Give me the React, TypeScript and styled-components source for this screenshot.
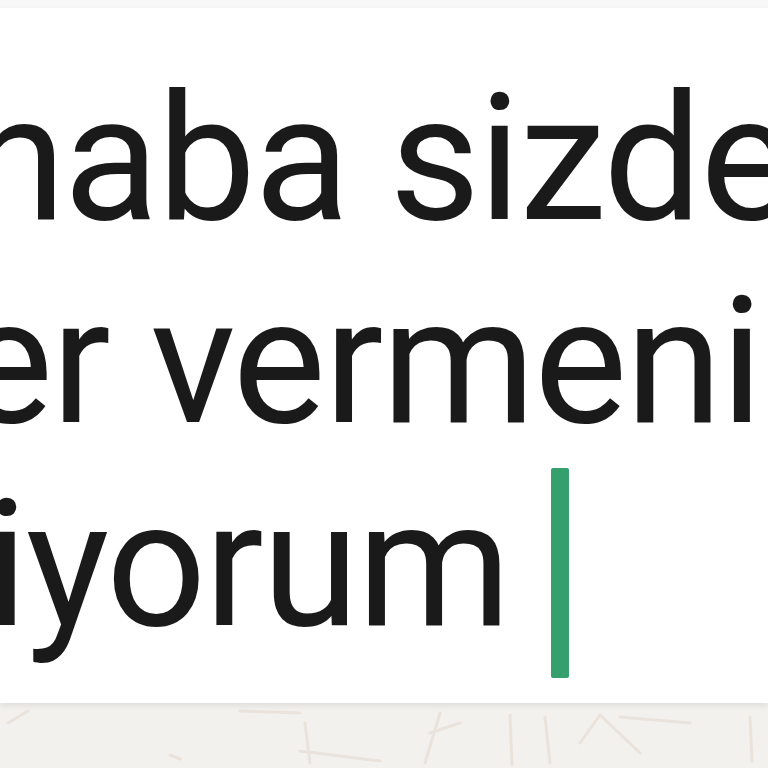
import React from "react";
import styled, { createGlobalStyle } from "styled-components";

const Global = createGlobalStyle`
  html, body { margin: 0; padding: 0; background: #ffffff; }
  #root { width: 768px; height: 768px; }
`;

const Screen = styled.div`
  width: 768px;
  height: 768px;
  display: flex;
  flex-direction: column;
  overflow: hidden;
  background: #f3f1ed;
`;

const TopStrip = styled.div`
  height: 8px;
  flex: none;
  background: #f8f8f8;
`;

const InputCard = styled.div`
  flex: none;
  height: 695px;
  background: #ffffff;
  overflow: hidden;
  padding-top: 50px;
  box-sizing: border-box;
  box-shadow: 0 3px 6px rgba(0, 0, 0, 0.08);
  position: relative;
  z-index: 1;
`;

const TextBlock = styled.div`
  font-family: Roboto, "Noto Sans", sans-serif;
  font-size: 176px;
  line-height: 203px;
  letter-spacing: -2px;
  color: #1a1a1a;
  white-space: nowrap;
`;

const Line = styled.div<{ $shift: number }>`
  margin-left: ${(p) => p.$shift}px;
  height: 203px;
`;

const Caret = styled.span`
  display: inline-block;
  width: 18px;
  height: 210px;
  margin-top: 4px;
  vertical-align: top;
  background: #35a06e;
  border-radius: 2px;
`;

const Wallpaper = styled.div`
  flex: 1;
  background: #f3f1ed;
  display: flex;
`;

export default function App() {
  return (
    <>
      <Global />
      <Screen>
        <TopStrip />
        <InputCard>
          <TextBlock>
            <Line $shift={-332}>Merhaba sizden</Line>
            <Line $shift={-397}>bilgiler vermenizi</Line>
            <Line $shift={-200}>
              istiyorum <Caret />
            </Line>
          </TextBlock>
        </InputCard>
        <Wallpaper>
          <svg width="768" height="65" viewBox="0 0 768 65" fill="none" stroke="#e9e3dc" strokeWidth="3" strokeLinecap="round">
            <path d="M8 20 L28 8" />
            <path d="M240 8 L300 10 M305 20 L310 60 M300 48 L380 58" />
            <path d="M440 10 L425 60 M430 30 L460 20" />
            <path d="M510 12 L512 62 M545 14 L550 60 M580 40 L600 12 L640 50 M620 14 L690 20" />
            <path d="M750 14 L752 58" />
            <path d="M170 52 L180 56" />
          </svg>
        </Wallpaper>
      </Screen>
    </>
  );
}
